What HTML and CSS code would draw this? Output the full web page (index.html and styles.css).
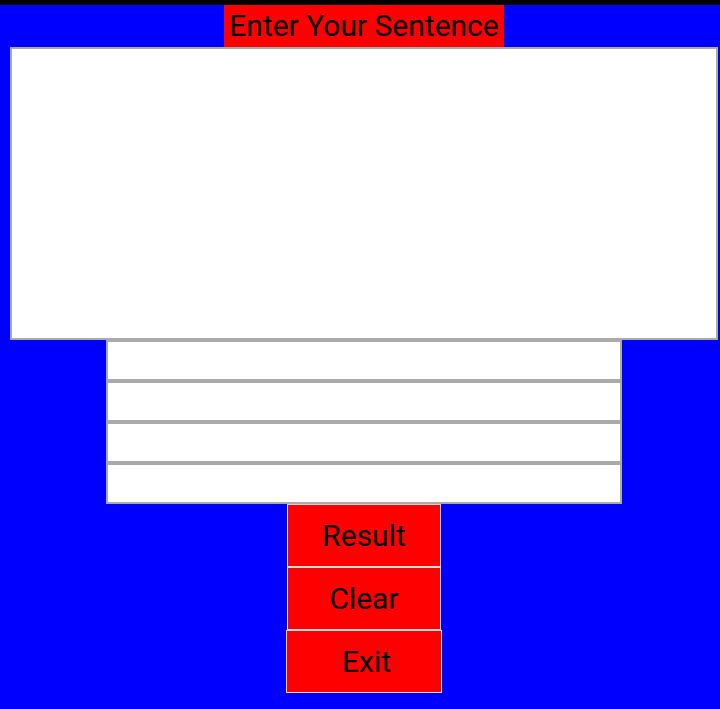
FILE: index.html
```html
<!DOCTYPE html>
<html>
<head>
<meta charset="utf-8">
<title>Sentence</title>
<link rel="stylesheet" href="styles.css">
</head>
<body>
<div class="topbar"></div>
<div class="app">
  <div class="title">Enter Your Sentence</div>
  <textarea class="sentence"></textarea>
  <div class="fields">
    <input class="field" type="text">
    <input class="field" type="text">
    <input class="field" type="text">
    <input class="field" type="text">
  </div>
  <div class="buttons">
    <button class="btn">Result</button>
    <button class="btn">Clear</button>
    <button class="btn btn-exit">Exit</button>
  </div>
</div>
</body>
</html>
```
FILE: styles.css
```css
html, body {
  margin: 0;
  padding: 0;
  background: #0000ff;
  font-family: Roboto, "Liberation Sans", sans-serif;
}
.topbar {
  height: 5px;
  background: #000;
}
.app {
  display: flex;
  flex-direction: column;
  align-items: center;
  padding-left: 8px;
}
.title {
  background: #ff0000;
  color: #000;
  width: 280px;
  height: 42px;
  line-height: 42px;
  font-size: 30px;
  text-align: center;
  white-space: nowrap;
}
.sentence {
  display: block;
  box-sizing: border-box;
  width: 708px;
  height: 293px;
  margin: 0;
  border: 2px solid #aaaaaa;
  background: #fff;
  resize: none;
  overflow: hidden;
  outline: none;
}
.fields {
  display: flex;
  flex-direction: column;
}
.field {
  display: block;
  box-sizing: border-box;
  width: 516px;
  height: 41px;
  margin: 0;
  border: 2px solid #aaaaaa;
  background: #fff;
  outline: none;
  padding: 0;
}
.buttons {
  display: flex;
  flex-direction: column;
  align-items: center;
}
.btn {
  display: block;
  box-sizing: border-box;
  width: 154px;
  height: 63px;
  margin: 0;
  padding: 0;
  border: 1px solid #dcdcdc;
  background: #ff0000;
  color: #000;
  font-family: Roboto, "Liberation Sans", sans-serif;
  font-size: 30px;
  cursor: pointer;
}
.btn-exit {
  width: 156px;
  padding-left: 5px;
}
```
